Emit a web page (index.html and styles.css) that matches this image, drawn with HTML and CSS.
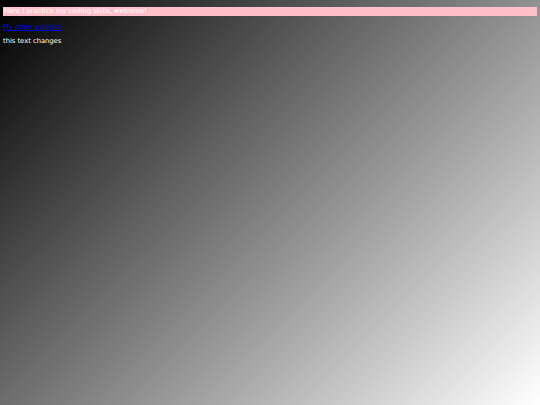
FILE: index.html
```html
<!DOCTYPE html>
<html>
<head>
<meta charset="utf-8">
<link rel="stylesheet" href="styles.css">
</head>
<body>
<h1 class="title">Here I practice my coding skills, welcome!</h1>
<p class="links"><a href="#" class="link">My other website</a></p>
<p class="changing">this text changes</p>
</body>
</html>
```
FILE: styles.css
```css
html {
  height: 100%;
}
body {
  margin: 0;
  min-height: 100%;
  padding: 7px 3px 0;
  box-sizing: border-box;
  background: linear-gradient(135deg, #000000, #ffffff);
  font-family: "DejaVu Sans", Verdana, sans-serif;
  font-size: 6.75px;
  color: #ffffff;
}
.title {
  margin: 0;
  font-size: 6.75px;
  font-weight: normal;
  line-height: 9px;
  background: #ffc0cb;
  color: #ffffff;
  padding-left: 1px;
}
.links {
  margin: 7px 0 0;
  line-height: 9px;
}
.link {
  color: #0000ee;
}
.changing {
  margin: 5px 0 0;
  line-height: 9px;
}
```
